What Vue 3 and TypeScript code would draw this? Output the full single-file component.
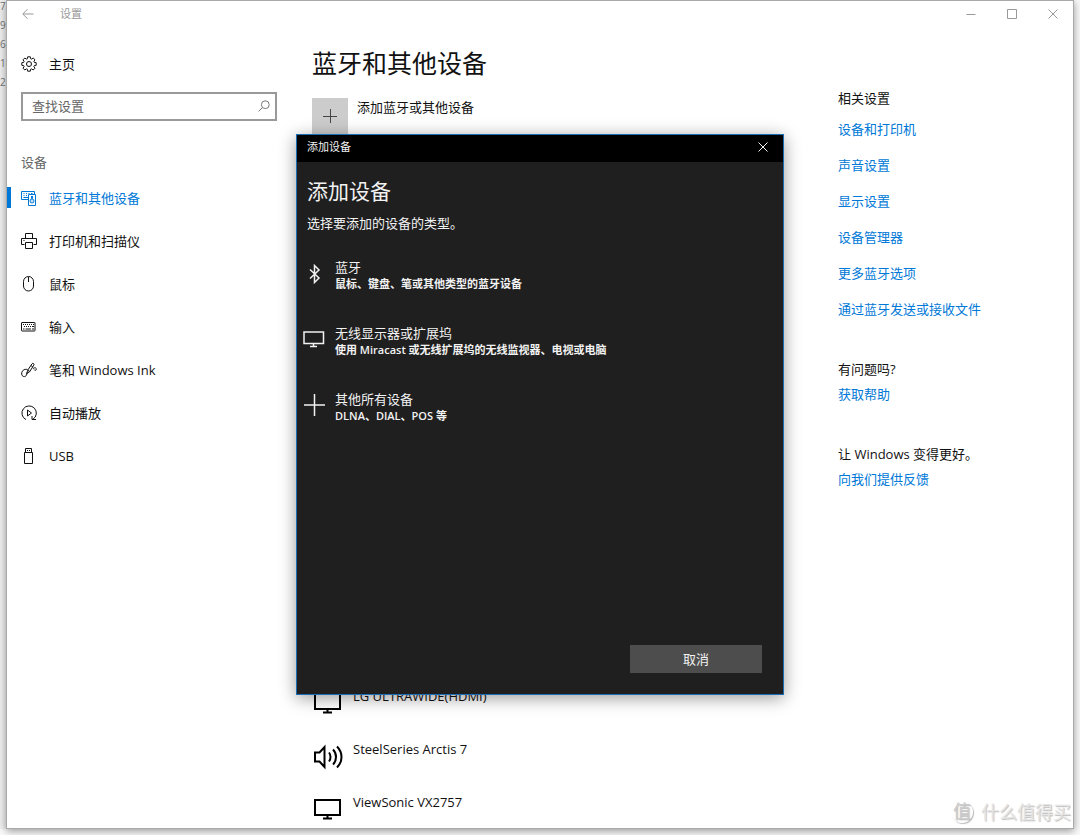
<script setup lang="ts">
interface NavItem {
  icon: string
  label: string
}

interface DeviceKind {
  icon: string
  title: string
  detail: string
}

interface Device {
  icon: 'monitor' | 'speaker'
  name: string
}

const backdropDigits: string[] = ['7', '9', '6', '1', '2']

const navItems: NavItem[] = [
  { icon: 'devices', label: '蓝牙和其他设备' },
  { icon: 'printer', label: '打印机和扫描仪' },
  { icon: 'mouse', label: '鼠标' },
  { icon: 'keyboard', label: '输入' },
  { icon: 'pen', label: '笔和 Windows Ink' },
  { icon: 'autoplay', label: '自动播放' },
  { icon: 'usb', label: 'USB' },
]

const relatedLinks: string[] = [
  '设备和打印机',
  '声音设置',
  '显示设置',
  '设备管理器',
  '更多蓝牙选项',
  '通过蓝牙发送或接收文件',
]

const devices: Device[] = [
  { icon: 'monitor', name: 'LG ULTRAWIDE(HDMI)' },
  { icon: 'speaker', name: 'SteelSeries Arctis 7' },
  { icon: 'monitor', name: 'ViewSonic VX2757' },
]

const deviceKinds: DeviceKind[] = [
  { icon: 'bluetooth', title: '蓝牙', detail: '鼠标、键盘、笔或其他类型的蓝牙设备' },
  { icon: 'display', title: '无线显示器或扩展坞', detail: '使用 Miracast 或无线扩展坞的无线监视器、电视或电脑' },
  { icon: 'plus', title: '其他所有设备', detail: 'DLNA、DIAL、POS 等' },
]
</script>

<template>
  <div class="desktop">
    <div class="gutter" aria-hidden="true">
      <span v-for="digit in backdropDigits" :key="digit">{{ digit }}</span>
    </div>

    <div class="window">
      <header class="titlebar">
        <button class="back" type="button" aria-label="返回">
          <svg width="12" height="12" viewBox="0 0 12 12"><path d="M11.5 6H1M5.5 1.2L.8 6l4.7 4.8" /></svg>
        </button>
        <span class="caption">设置</span>
        <div class="controls">
          <button type="button" aria-label="最小化">
            <svg width="10" height="10" viewBox="0 0 10 10"><path d="M.5 5.5h9" /></svg>
          </button>
          <button type="button" aria-label="最大化">
            <svg width="10" height="10" viewBox="0 0 10 10"><path d="M.5.5h9v9h-9z" /></svg>
          </button>
          <button type="button" aria-label="关闭">
            <svg width="10" height="10" viewBox="0 0 10 10"><path d="M.5.5l9 9M9.5.5l-9 9" /></svg>
          </button>
        </div>
      </header>

      <div class="content">
        <aside class="sidebar">
          <a class="home" href="#">
            <svg class="icon" viewBox="0 0 16 16">
              <path d="M6.7.8h2.6l.3 1.9 1 .4 1.6-1.1 1.8 1.8-1.1 1.6.4 1 1.9.3v2.6l-1.9.3-.4 1 1.1 1.6-1.8 1.8-1.6-1.1-1 .4-.3 1.9H6.7l-.3-1.9-1-.4-1.6 1.1L2 12.200l1.100-1.600-.4-1L.8 9.300V6.700l1.900-.3.4-1L2 3.800 3.800 2l1.600 1.100 1-.4z" />
              <circle cx="8" cy="8" r="2.500" />
            </svg>
            <span>主页</span>
          </a>

          <label class="search">
            <input type="text" placeholder="查找设置" aria-label="查找设置" />
            <svg width="12" height="12" viewBox="0 0 12 12"><circle cx="7.300" cy="4.700" r="3.900" /><path d="M4.500 7.500L.6 11.400" /></svg>
          </label>

          <h2>设备</h2>

          <nav>
            <a v-for="(item, index) in navItems" :key="item.label" href="#" :class="{ active: index === 0 }">
              <svg class="icon" viewBox="0 0 16 16">
                <template v-if="item.icon === 'devices'">
                  <path d="M7 9.500H.5v-8h13V4M2.500 3.500h1M5 3.500h1M7.500 3.500h1M10 3.500h1.500M2.500 5.500h1M5 5.500h1M2.500 7.500H7" />
                  <path d="M7.500 4.500h7v11h-7z" />
                  <circle cx="11" cy="11" r="2" />
                  <path d="M10.500 6v2.500h1V6M11 10.500v1" />
                </template>
                <template v-else-if="item.icon === 'printer'">
                  <path d="M4.500 5.500v-5h7v5M3.500 11.500h-3v-6h15v6h-3M4.500 9.500h7v6h-7zM2.500 7.500h1" />
                </template>
                <template v-else-if="item.icon === 'mouse'">
                  <rect x="2.500" y=".5" width="10" height="14.500" rx="5" />
                  <path d="M7.500 1v5" />
                </template>
                <template v-else-if="item.icon === 'keyboard'">
                  <rect x=".5" y="3.500" width="13.500" height="8.500" rx=".5" />
                  <path d="M2 5.500h1M4 5.500h1M6 5.500h1M8 5.500h1M10 5.500h1M12 5.500h1M3 7.500h1M5 7.500h1M7 7.500h1M9 7.500h1M11 7.500h2M2 10h1.500M4.500 10h5.500M11 10h2" />
                </template>
                <template v-else-if="item.icon === 'pen'">
                  <path d="M5.500 11.500L7 7.800 11 1.800c.8-1.100 2.600-.1 1.900 1.200L8.600 9.800zM7 7.800l1.700 1.700M10 3.600L11.800 4.800" />
                  <path d="M6.500 7.500C3 6.500.5 9 .7 12c.2 3 3.800 3.500 4.800 1 .6-1.500 1-2.500 2-3" />
                  <path d="M12 6.500c2-1.500 3.700-.5 3.300 1-.3 1.200-1.800 1-2 .2" />
                </template>
                <template v-else-if="item.icon === 'autoplay'">
                  <path d="M5 14.600A7.200 7.200 0 1 1 12 14.200" />
                  <path d="M6.500 5v6l4-3z" />
                  <path d="M11 11v3.500h4" />
                </template>
                <template v-else>
                  <path d="M4.500 4.500V.500h6v4M3.500 4.500h8v11h-8zM6 2.500h1M8 2.500h1" />
                </template>
              </svg>
              <span>{{ item.label }}</span>
            </a>
          </nav>
        </aside>

        <main>
          <h1>蓝牙和其他设备</h1>
          <button class="add" type="button">
            <span class="tile">
              <svg width="14" height="14" viewBox="0 0 14 14"><path d="M7.500 0v14M0 7.500h14" /></svg>
            </span>
            <span>添加蓝牙或其他设备</span>
          </button>
          <ul class="devices">
            <li v-for="device in devices" :key="device.name">
              <svg v-if="device.icon === 'monitor'" width="32" height="32" viewBox="0 0 32 32">
                <path d="M3 8h25v15H3zM15.500 23v3M11 26.500h9" />
              </svg>
              <svg v-else width="32" height="32" viewBox="0 0 32 32">
                <path d="M3 13.500h4.500L12.500 8v20l-5-5.500H3z" />
                <path d="M17 13.500c2 2.500 2 6.500 0 9M21 10.500c4 4 4 11 0 15M25 7.500c6 6 6 15 0 21" />
              </svg>
              <span>{{ device.name }}</span>
            </li>
          </ul>
        </main>

        <aside class="related">
          <h3>相关设置</h3>
          <ul>
            <li v-for="link in relatedLinks" :key="link"><a href="#">{{ link }}</a></li>
          </ul>
          <section>
            <h3>有问题吗?</h3>
            <a href="#">获取帮助</a>
          </section>
          <section>
            <h3>让 Windows 变得更好。</h3>
            <a href="#">向我们提供反馈</a>
          </section>
        </aside>
      </div>

      <div class="overlay">
        <div class="dialog" role="dialog" aria-labelledby="dialog-title">
          <header>
            <span>添加设备</span>
            <button type="button" aria-label="关闭">
              <svg width="10" height="10" viewBox="0 0 10 10"><path d="M.5.5l9 9M9.500.5l-9 9" /></svg>
            </button>
          </header>
          <div class="dialog-body">
            <h2 id="dialog-title">添加设备</h2>
            <p>选择要添加的设备的类型。</p>
            <div class="kinds">
              <button v-for="kind in deviceKinds" :key="kind.title" type="button">
                <svg width="22" height="22" viewBox="0 0 22 22">
                  <path v-if="kind.icon === 'bluetooth'" d="M7 5.500l9 8.500-4.500 4.500v-17L16 6l-9 8.500" />
                  <path v-else-if="kind.icon === 'display'" d="M1 2h19.500v11.500H1zM10.500 13.500v3M7 16.500h7" />
                  <path v-else d="M11.500-2v22M1 9h21" />
                </svg>
                <span class="kind-text">
                  <span class="kind-title">{{ kind.title }}</span>
                  <strong>{{ kind.detail }}</strong>
                </span>
              </button>
            </div>
            <button class="cancel" type="button">取消</button>
          </div>
        </div>
      </div>

      <div class="watermark">
        <span class="seal">值</span>
        <span>什么值得买</span>
      </div>
    </div>
  </div>
</template>

<style>
body {
  margin: 0;
  background: #fff;
}
</style>

<style scoped>
.desktop {
  display: flex;
  box-sizing: border-box;
  min-height: 100vh;
  padding: 0 6px 6px 0;
  overflow: hidden;
  background: #fafafa;
  color: #111;
  font: 13px/20px "Open Sans", "Noto Sans CJK SC", sans-serif;
}

h1,
h2,
h3,
p,
ul {
  margin: 0;
  padding: 0;
  font-weight: 400;
  list-style: none;
}

h2,
h3 {
  font-size: 13px;
}

a {
  color: #0078d7;
  text-decoration: none;
}

button {
  padding: 0;
  border: 0;
  background: none;
  color: inherit;
  font: inherit;
}

svg {
  flex: none;
  overflow: visible;
  fill: none;
  stroke: currentColor;
  stroke-width: 1;
}

.gutter {
  display: flex;
  flex: none;
  flex-direction: column;
  gap: 7px;
  width: 6px;
  background: #f0f0f0;
  color: #777;
  font-size: 10px;
  line-height: 12px;
}

.window {
  position: relative;
  display: flex;
  flex: 1;
  flex-direction: column;
  border: 1px solid #a9a9a9;
  background: #fff;
  box-shadow: 0 2px 8px rgba(0, 0, 0, 0.4);
}

.titlebar {
  display: flex;
  align-items: center;
  box-sizing: border-box;
  height: 27px;
  padding-bottom: 2px;
  color: #999;
  font-size: 11px;
}

.back {
  display: grid;
  place-items: center;
  width: 42px;
  height: 24px;
}

.caption {
  margin-left: 11px;
}

.controls {
  display: flex;
  margin-left: auto;
}

.controls button {
  display: grid;
  place-items: center;
  width: 41px;
  height: 24px;
}

.content {
  display: grid;
  flex: 1;
  grid-template-columns: 305px 1fr 235px;
}

.sidebar {
  padding: 14px 35px 0 0;
}

.icon {
  width: 16px;
  height: 16px;
}

.home,
nav a {
  display: flex;
  align-items: center;
  gap: 12px;
  padding-left: 14px;
  color: #111;
}

.home {
  height: 44px;
}

.search {
  display: flex;
  align-items: center;
  box-sizing: border-box;
  height: 29px;
  margin: 6px 0 0 14px;
  padding: 0 5px 2px 9px;
  border: 2px solid #999;
  color: #777;
}

.search input {
  flex: 1;
  min-width: 0;
  padding: 0;
  border: 0;
  outline: 0;
  background: none;
  color: #333;
  font: inherit;
}

.search input::placeholder {
  color: #666;
  opacity: 1;
}

.sidebar h2 {
  margin: 31px 0 4px 14px;
  color: #666;
}

nav a {
  position: relative;
  height: 43px;
}

nav a.active {
  color: #0078d7;
}

nav a.active::before {
  position: absolute;
  top: 11px;
  left: 0;
  width: 4px;
  height: 21px;
  background: #0078d7;
  content: "";
}

main {
  display: flex;
  flex-direction: column;
  padding-top: 17px;
}

main h1 {
  font-size: 25px;
  line-height: 36px;
}

.add {
  display: flex;
  align-items: flex-start;
  gap: 9px;
  margin-top: 17px;
  line-height: 18px;
}

.tile {
  display: grid;
  place-items: center;
  width: 36px;
  height: 36px;
  background: #ccc;
  color: #444;
}

.devices {
  display: grid;
  gap: 21px;
  margin-top: auto;
  padding-bottom: 4px;
}

.devices li {
  display: flex;
  gap: 9px;
  height: 32px;
}

.devices svg {
  color: #000;
  stroke-width: 2;
}

.related {
  padding-top: 60px;
}

.related ul {
  display: grid;
  gap: 16px;
  margin-top: 11px;
}

.related section {
  display: grid;
  gap: 5px;
  margin-top: 40px;
}

.overlay {
  position: absolute;
  inset: 0;
  display: grid;
  place-items: center;
}

.dialog {
  display: flex;
  flex-direction: column;
  box-sizing: border-box;
  width: 488px;
  max-width: 100%;
  min-height: 561px;
  border: 1px solid #1b6eb5;
  background: #1f1f1f;
  box-shadow: 0 3px 16px rgba(0, 0, 0, 0.4);
  color: #f2f2f2;
}

.dialog header {
  display: flex;
  align-items: center;
  justify-content: space-between;
  box-sizing: border-box;
  height: 27px;
  padding: 0 0 3px 10px;
  background: #000;
  font-size: 11px;
}

.dialog header button {
  display: grid;
  place-items: center;
  width: 41px;
  height: 24px;
}

.dialog-body {
  display: flex;
  flex: 1;
  flex-direction: column;
  padding: 15px 21px 21px 10px;
}

.dialog h2 {
  font-size: 21px;
  line-height: 28px;
}

.dialog p {
  margin-top: 8px;
}

.kinds {
  display: grid;
  gap: 32px;
  margin: 25px 0 0 -4px;
}

.kinds button {
  display: flex;
  align-items: center;
  gap: 10px;
  height: 34px;
  text-align: left;
}

.kinds svg {
  stroke-width: 1.5;
}

.kind-text {
  display: grid;
  gap: 2px;
}

.kind-title {
  line-height: 16px;
}

.kind-text strong {
  font-size: 11px;
  font-weight: 600;
  line-height: 14px;
}

.cancel {
  align-self: flex-end;
  width: 132px;
  height: 28px;
  margin-top: auto;
  background: #4d4d4d;
}

.watermark {
  position: absolute;
  right: 2px;
  bottom: 4px;
  display: flex;
  align-items: center;
  gap: 8px;
  color: #e6e6e6;
  font-size: 18px;
  line-height: 24px;
  text-shadow: 1px 1px 1px #bbb;
}

.seal {
  width: 22px;
  height: 22px;
  border-radius: 50%;
  box-shadow: 1px 1px 1px #bbb;
  color: #ccc;
  line-height: 20px;
  text-align: center;
}
</style>
